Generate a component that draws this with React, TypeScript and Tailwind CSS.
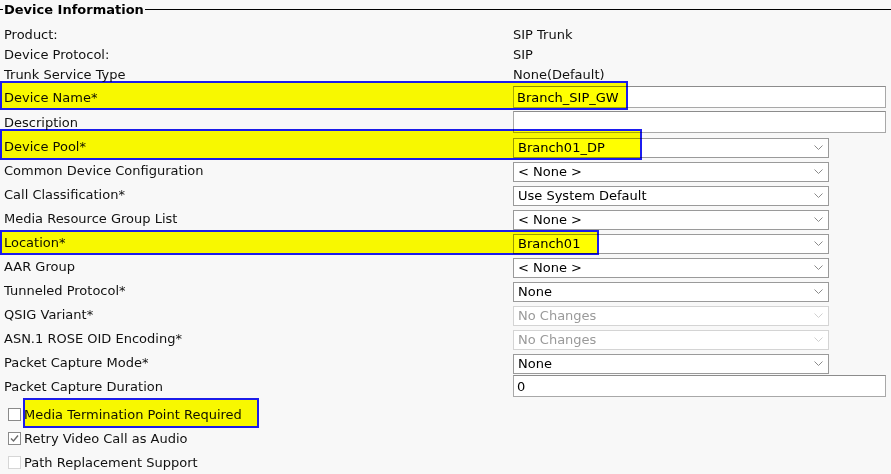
import React from "react";

type Field =
  | { label: string; kind: "text"; value: string; h: string }
  | { label: string; kind: "input"; value: string; h: string }
  | { label: string; kind: "select"; value: string; h: string; disabled?: boolean };

const FIELDS: Field[] = [
  { label: "Product:", kind: "text", value: "SIP Trunk", h: "h-[20px]" },
  { label: "Device Protocol:", kind: "text", value: "SIP", h: "h-[20px]" },
  { label: "Trunk Service Type", kind: "text", value: "None(Default)", h: "h-[20px]" },
  { label: "Device Name*", kind: "input", value: "Branch_SIP_GW", h: "h-[26px]" },
  { label: "Description", kind: "input", value: "", h: "h-[24px]" },
  { label: "Device Pool*", kind: "select", value: "Branch01_DP", h: "h-[24px]" },
  { label: "Common Device Configuration", kind: "select", value: "< None >", h: "h-[24px]" },
  { label: "Call Classification*", kind: "select", value: "Use System Default", h: "h-[24px]" },
  { label: "Media Resource Group List", kind: "select", value: "< None >", h: "h-[24px]" },
  { label: "Location*", kind: "select", value: "Branch01", h: "h-[24px]" },
  { label: "AAR Group", kind: "select", value: "< None >", h: "h-[24px]" },
  { label: "Tunneled Protocol*", kind: "select", value: "None", h: "h-[24px]" },
  { label: "QSIG Variant*", kind: "select", value: "No Changes", h: "h-[24px]", disabled: true },
  { label: "ASN.1 ROSE OID Encoding*", kind: "select", value: "No Changes", h: "h-[24px]", disabled: true },
  { label: "Packet Capture Mode*", kind: "select", value: "None", h: "h-[24px]" },
  { label: "Packet Capture Duration", kind: "input", value: "0", h: "h-[24px]" },
];

// annotation boxes drawn over the form
const MARKS = [
  "left-0 top-[81px] w-[628px] h-[29px]",
  "left-0 top-[129px] w-[642px] h-[31px]",
  "left-0 top-[230px] w-[599px] h-[25px]",
  "left-[23px] top-[398px] w-[236px] h-[30px]",
];

function Chevron({ dim }: { dim?: boolean }) {
  return (
    <svg width="9" height="6" viewBox="0 0 9 6" className="shrink-0">
      <polyline
        points="0.5,0.5 4.5,4.5 8.5,0.5"
        fill="none"
        stroke={dim ? "#d0d0d0" : "#8a8a8a"}
        strokeWidth="1"
      />
    </svg>
  );
}

function Control({ f }: { f: Field }) {
  if (f.kind === "text") {
    return <span className="text-[#111]">{f.value}</span>;
  }
  if (f.kind === "input") {
    return (
      <div className="w-[373px] h-[22px] bg-white border border-[#a8a8a8] border-t-[#8c8c8c] flex items-center px-[3px] text-black">
        {f.value}
      </div>
    );
  }
  return (
    <div
      className={
        f.disabled
          ? "mt-[3px] w-[316px] h-[20px] bg-white border border-[#d4d4d4] flex items-center justify-between pl-[4px] pr-[5px] text-[#9a9a9a]"
          : "mt-[3px] w-[316px] h-[20px] bg-white border border-[#9a9a9a] flex items-center justify-between pl-[4px] pr-[5px] text-black"
      }
    >
      <span>{f.value}</span>
      <Chevron dim={f.disabled} />
    </div>
  );
}

function Check({ checked, disabled, label }: { checked?: boolean; disabled?: boolean; label: string }) {
  return (
    <div className="h-[24px] flex items-center">
      <div
        className={
          disabled
            ? "ml-[8px] w-[13px] h-[13px] bg-white border border-[#d6d6d6]"
            : "ml-[8px] w-[13px] h-[13px] bg-white border border-[#8a8a8a] flex items-center justify-center"
        }
      >
        {checked && (
          <svg width="11" height="11" viewBox="0 0 11 11">
            <polyline points="2,5.5 4.5,8 9,2.5" fill="none" stroke="#6a6a6a" strokeWidth="1.4" />
          </svg>
        )}
      </div>
      <span className="ml-[3px] text-[#111]">{label}</span>
    </div>
  );
}

export default function App() {
  return (
    <div
      className="relative w-[891px] h-[474px] overflow-hidden bg-[#f8f8f8] text-[13px] leading-none"
      style={{ fontFamily: "Verdana, 'DejaVu Sans', sans-serif" }}
    >
      {/* Legend */}
      <div className="h-[24px] flex items-start">
        <div className="flex items-center w-full h-[18px]">
          <div className="w-[3px] h-px bg-black" />
          <span className="px-[1px] font-bold text-black">Device Information</span>
          <div className="flex-1 h-px bg-black" />
        </div>
      </div>

      {/* Fields */}
      <div className="flex flex-col">
        {FIELDS.map((f) => (
          <div key={f.label} className={`${f.h} grid grid-cols-[513px_1fr] items-center`}>
            <span className="pl-[4px] text-[#111]">{f.label}</span>
            <Control f={f} />
          </div>
        ))}
      </div>

      <div className="flex flex-col mt-[4px]">
        <Check label="Media Termination Point Required" />
        <Check checked label="Retry Video Call as Audio" />
        <Check disabled label="Path Replacement Support" />
      </div>

      {/* Highlight annotations */}
      {MARKS.map((m) => (
        <div
          key={m}
          className={`absolute ${m} bg-[#ffff00] mix-blend-multiply border-2 border-[#1c1cf0] pointer-events-none`}
        />
      ))}
    </div>
  );
}
